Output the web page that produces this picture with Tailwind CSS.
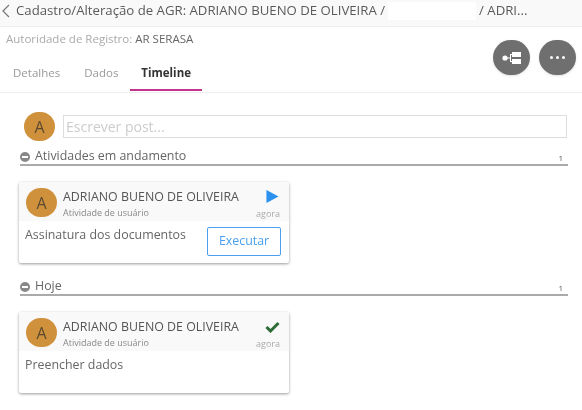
<!DOCTYPE html>
<html lang="pt">
<head>
  <meta charset="UTF-8" />
  <title>Timeline</title>
  <script src="https://cdn.jsdelivr.net/npm/@tailwindcss/browser@4"></script>
</head>
<body class="bg-white w-[582px] h-[410px] overflow-hidden font-['Open_Sans',sans-serif] text-[#555] blur-[0.4px]">
  <!-- cabecalho -->
  <div class="h-[27px] bg-[#f9f9f9] border-b border-[#eee] flex items-center pl-[1px] pb-[4px] text-[13.2px] text-[#5a5a5a] whitespace-nowrap">
    <svg class="w-[10px] h-[14px] mr-[5px]" viewBox="0 0 10 14" fill="none" stroke="#777" stroke-width="1.2"><path d="M8 1 2 7l6 6" /></svg>
    <span>Cadastro/Alteração de AGR: ADRIANO BUENO DE OLIVEIRA /</span>
    <span class="w-[88px] h-[18px] bg-white mx-[3px]"></span>
    <span>/ ADRI...</span>
  </div>

  <!-- sub cabecalho e abas -->
  <div class="h-[66px] border-b border-[#eee] flex justify-between">
    <div>
      <p class="pl-[6px] pt-[4px] text-[11.5px] leading-[15px] text-[#aaa]">Autoridade de Registro: <span class="text-[#666]">AR SERASA</span></p>
      <div class="flex mt-[13px] text-[11.5px] pl-[1px]">
        <div class="px-[12px] h-[32px] pt-[5px] text-[#999]">Detalhes</div>
        <div class="px-[12px] h-[32px] pt-[5px] text-[#999]">Dados</div>
        <div class="px-[11px] h-[32px] pt-[5px] font-bold text-[#333] border-b-2 border-[#c2358c]">Timeline</div>
      </div>
    </div>
    <div class="flex gap-[9px] pt-[13px] pr-[6px]">
      <button class="w-[37px] h-[35px] rounded-full bg-[#6f6f6f] shadow-sm flex items-center justify-center">
        <svg class="w-[20px] h-[14px]" viewBox="0 0 20 14" fill="#fff"><circle cx="3" cy="7" r="2.6" /><rect x="10" y="1" width="9" height="5" /><rect x="10" y="8" width="9" height="5" /><path d="M5 6.5h3V3h2v1H9v6h1v1H8V7.5H5z" /></svg>
      </button>
      <button class="w-[37px] h-[35px] rounded-full bg-[#6f6f6f] shadow-sm flex items-center justify-center gap-[3px]">
        <span class="w-[3px] h-[3px] rounded-full bg-white"></span>
        <span class="w-[3px] h-[3px] rounded-full bg-white"></span>
        <span class="w-[3px] h-[3px] rounded-full bg-white"></span>
      </button>
    </div>
  </div>

  <!-- post -->
  <div class="flex items-center gap-[8px] pl-[24px] pr-[15px] mt-[19px]">
    <div class="w-[31px] h-[29px] rounded-full bg-[#d0913c] flex items-center justify-center text-[16px] text-[#5b4a30]">A</div>
    <div class="flex-1 h-[23px] border border-[#ddd] pl-[2px] text-[14px] leading-[21px] text-[#ccc]">Escrever post...</div>
  </div>

  <!-- em andamento -->
  <div class="mt-[5px] ml-[20px] mr-[14px] h-[20px] pt-[3px] pr-[5px] border-b-2 border-[#aaa] flex items-center justify-between">
    <div class="flex items-center gap-[5px] text-[12.4px] text-[#666]">
      <span class="w-[10px] h-[10px] rounded-full bg-[#888] flex items-center justify-center"><span class="w-[6px] h-[2px] bg-white"></span></span>
      Atividades em andamento
    </div>
    <span class="text-[8px] self-end text-[#555]">1</span>
  </div>

  <div class="mt-[16px] ml-[19px] w-[270px] h-[81px] rounded-[2px] bg-white shadow-[0_1px_3px_rgba(0,0,0,0.4)]">
    <div class="h-[39px] bg-[#f9f9f9] flex pl-[7px] pr-[9px]">
      <div class="w-[31px] h-[29px] mt-[6px] rounded-full bg-[#d0913c] flex items-center justify-center text-[16px] text-[#5b4a30] shrink-0">A</div>
      <div class="ml-[6px] flex-1 pt-[7px]">
        <p class="text-[12.4px] leading-[16px] text-[#555]">ADRIANO BUENO DE OLIVEIRA</p>
        <p class="text-[9px] leading-[12px] mt-[2px] text-[#888]">Atividade de usuário</p>
      </div>
      <div class="flex flex-col items-end pt-[8px]">
        <svg class="w-[13px] h-[13px] mr-[1px]" viewBox="0 0 13 14"><path d="M0 0l13 7L0 14z" fill="#2b90ee" /></svg>
        <span class="text-[9px] leading-[10px] mt-[6px] text-[#aaa]">agora</span>
      </div>
    </div>
    <div class="flex justify-between pl-[6px] pr-[8px]">
      <p class="text-[12.4px] leading-[16px] mt-[6px] text-[#666]">Assinatura dos documentos</p>
      <button class="w-[74px] h-[29px] mt-[6px] border border-[#4a9ff0] rounded-[2px] text-[12.4px] text-[#4a9ff0]">Executar</button>
    </div>
  </div>

  <!-- hoje -->
  <div class="mt-[13px] ml-[20px] mr-[14px] h-[20px] pt-[3px] pr-[5px] border-b-2 border-[#aaa] flex items-center justify-between">
    <div class="flex items-center gap-[5px] text-[12.4px] text-[#666]">
      <span class="w-[10px] h-[10px] rounded-full bg-[#888] flex items-center justify-center"><span class="w-[6px] h-[2px] bg-white"></span></span>
      Hoje
    </div>
    <span class="text-[8px] self-end text-[#555]">1</span>
  </div>

  <div class="mt-[16px] ml-[19px] w-[270px] h-[81px] rounded-[2px] bg-white shadow-[0_1px_3px_rgba(0,0,0,0.4)]">
    <div class="h-[39px] bg-[#f9f9f9] flex pl-[7px] pr-[9px]">
      <div class="w-[31px] h-[29px] mt-[6px] rounded-full bg-[#d0913c] flex items-center justify-center text-[16px] text-[#5b4a30] shrink-0">A</div>
      <div class="ml-[6px] flex-1 pt-[7px]">
        <p class="text-[12.4px] leading-[16px] text-[#555]">ADRIANO BUENO DE OLIVEIRA</p>
        <p class="text-[9px] leading-[12px] mt-[2px] text-[#888]">Atividade de usuário</p>
      </div>
      <div class="flex flex-col items-end pt-[9px]">
        <svg class="w-[15px] h-[12px]" viewBox="0 0 14 12" fill="none" stroke="#2f6b36" stroke-width="3"><path d="M1 6l4 4 8-8" /></svg>
        <span class="text-[9px] leading-[10px] mt-[6px] text-[#aaa]">agora</span>
      </div>
    </div>
    <p class="pl-[6px] text-[12.4px] leading-[16px] mt-[6px] text-[#666]">Preencher dados</p>
  </div>
</body>
</html>
